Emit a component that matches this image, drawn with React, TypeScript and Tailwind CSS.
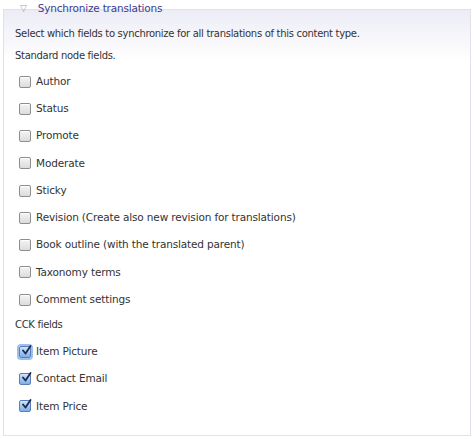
import React from "react";

function Box({ checked, focus }: { checked?: boolean; focus?: boolean }) {
  if (checked) {
    return (
      <span className={`relative inline-flex h-[12px] w-[12px] shrink-0 items-center justify-center rounded-[2px] border border-[#5a7fb8] bg-gradient-to-b from-[#cfe3fb] to-[#7eaee8] ${focus ? "shadow-[0_0_0_2px_#9cc0ee]" : ""}`}>
        <svg width="11" height="11" viewBox="0 0 11 11" className="absolute -top-[2px] left-[1px]">
          <path d="M2 5.5 L4.5 8.5 L9.5 1" fill="none" stroke="#1c2a4a" strokeWidth="1.8" strokeLinecap="round" strokeLinejoin="round" />
        </svg>
      </span>
    );
  }
  return (
    <span className="inline-block h-[12px] w-[12px] shrink-0 rounded-[2px] border border-[#8e8e8e] bg-gradient-to-b from-[#f4f4f4] to-[#dcdcdc] shadow-[inset_0_1px_0_#fff]" />
  );
}

function Row({ label, checked, focus }: { label: string; checked?: boolean; focus?: boolean }) {
  return (
    <div className="flex h-[27.25px] items-center gap-[5px] pl-[18px]">
      <Box checked={checked} focus={focus} />
      <span className="text-[10.5px] tracking-[-0.15px]">{label}</span>
    </div>
  );
}

export default function App() {
  const standard = [
    "Author",
    "Status",
    "Promote",
    "Moderate",
    "Sticky",
    "Revision (Create also new revision for translations)",
    "Book outline (with the translated parent)",
    "Taxonomy terms",
    "Comment settings",
  ];
  return (
    <div className="h-[439px] w-[474px] bg-white pt-[9px] pl-[3px] text-[#333] [font-family:'DejaVu_Sans',Verdana,sans-serif]">
      <div className="relative h-[427px] w-[468px] border border-[#e1e1ee] bg-gradient-to-b from-[#ececf6] via-white via-[12%] to-white">
        <div className="absolute -top-[9px] left-[14px] flex items-center gap-[11px] px-[2px] text-[10.5px] tracking-[-0.2px] text-[#3b3d8f]">
          <span className="text-[9px] text-[#a0a0b8]">▽</span>
          <span className="pr-[2px]">Synchronize translations</span>
        </div>
        <div className="pt-[17px] pl-[11px] text-[10px] leading-[14px] tracking-[-0.3px]">Select which fields to synchronize for all translations of this content type.</div>
        <div className="pt-[8px] pl-[11px] text-[10px] leading-[14px] tracking-[-0.3px]">Standard node fields.</div>
        <div className="mt-[5px] -ml-[3px]">
          {standard.map((s) => (
            <Row key={s} label={s} />
          ))}
        </div>
        <div className="pl-[11px] text-[10px] leading-[14px] tracking-[-0.3px] mt-[5px]">CCK fields</div>
        <div className="mt-[6px] -ml-[3px]">
          <Row label="Item Picture" checked focus />
          <Row label="Contact Email" checked />
          <Row label="Item Price" checked />
        </div>
      </div>
    </div>
  );
}
